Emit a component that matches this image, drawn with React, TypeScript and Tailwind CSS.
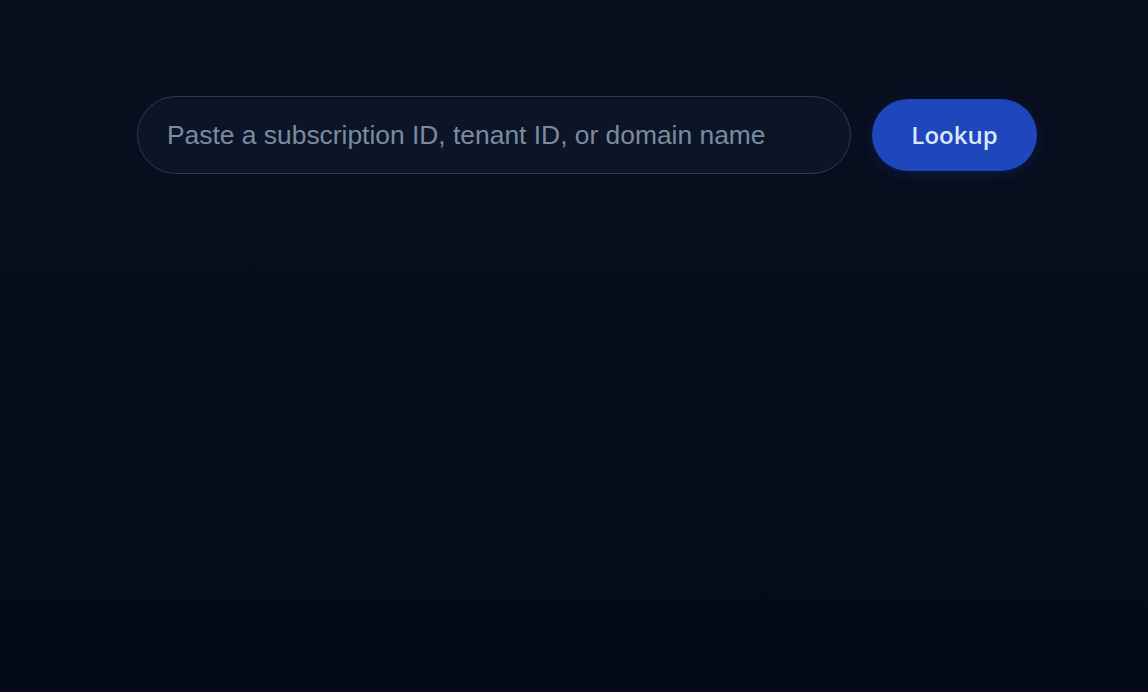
const App = () => {
  return (
    <div className="min-h-screen w-full bg-gradient-to-b from-[#090f1f] to-[#050a19] font-['Liberation_Sans',Arial,sans-serif]">
      <div className="flex items-center gap-[21px] pl-[137px] pt-[96px]">
        <input
          type="text"
          placeholder="Paste a subscription ID, tenant ID, or domain name"
          className="h-[78px] w-[714px] rounded-full border border-[#2c3a52] bg-[#0c1527] pl-[29px] pr-6 text-[26.4px] text-slate-200 outline-none placeholder:text-[#7c8aa0]"
        />
        <button className="h-[72px] w-[165px] rounded-full bg-[#1d47bb] font-['Open_Sans',sans-serif] text-[24px] font-semibold text-[#dbe6fb] shadow-[0_4px_14px_rgba(29,71,187,0.2)]">
          Lookup
        </button>
      </div>
    </div>
  );
};

export default App;
